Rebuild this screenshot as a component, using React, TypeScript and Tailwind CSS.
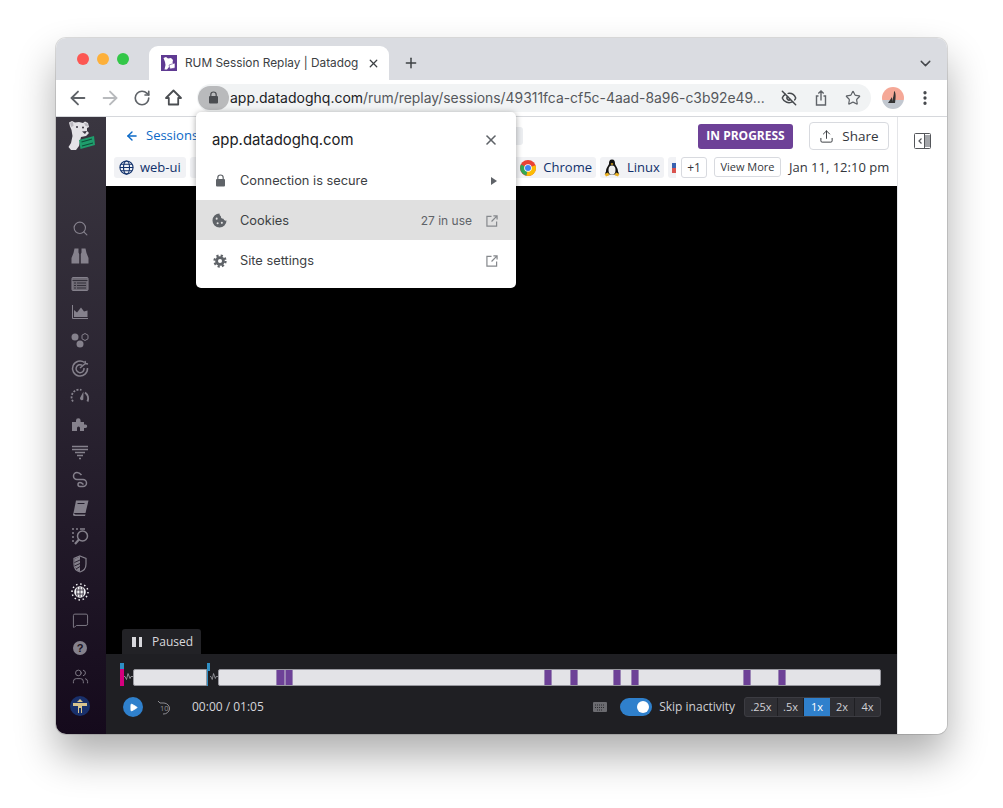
import React from "react";
import { ArrowLeft, ArrowRight, RotateCw, EyeOff, Star, X, Plus, ChevronDown, EllipsisVertical, Upload, Search, MessageSquare, Users, Play } from "lucide-react";

const Ic = ({ children, w = 20, h = 20 }: { children: React.ReactNode; w?: number; h?: number }) => (
  <svg width={w} height={h} viewBox="0 0 20 20" fill="none" className="shrink-0">{children}</svg>
);
const G = "#85818c";

const Dog = () => (
  <svg width="28" height="32" viewBox="0 0 28 32" className="shrink-0">
    <path d="M2 3.500 L5 2 L8 3.500 L12 3 L16 4 L18 2.500 L21 4 L22 8 L20 9 L20 12 L22 14 L19 17 L14 18 L13 22 L12 27 L9 31 L4 31 L1.500 28 L4 24 L5.500 17 L4.500 11 L3 7.500 Z" fill="#e4e2e6" />
    <path d="M3 3.500 L6 3 L6.500 7 L4 8 Z" fill="#b9b6bd" />
    <path d="M17 4 L20.500 4.500 L21 7.500 L18.500 7 Z" fill="#b9b6bd" />
    <circle cx="10" cy="8" r="1" fill="#3a3540" />
    <circle cx="16" cy="8.500" r="1" fill="#3a3540" />
    <path d="M15 12.500 L20 12 L18 15 Z" fill="#3a3540" />
    <path d="M12 21 L27 17 L28 26 L13.500 30 Z" fill="#1f9d6c" />
    <path d="M14.500 23 L25 20 M15 27 L26 24" stroke="#0e4f3a" strokeWidth="1.200" />
  </svg>
);

const Cog = ({ c = "#5f6368", hole = "#fff" }: { c?: string; hole?: string }) => (
  <svg width="14" height="14" viewBox="0 0 16 16" className="shrink-0 mx-[0.5px]">
    <circle cx="8" cy="8" r="5.500" fill={c} />
    <circle cx="8" cy="8" r="6.300" fill="none" stroke={c} strokeWidth="2.600" strokeDasharray="2.500 2.450" />
    <circle cx="8" cy="8" r="2.300" fill={hole} />
  </svg>
);
const CookieIc = () => (
  <svg width="15" height="15" viewBox="0 0 16 16" className="shrink-0">
    <path d="M8 .5a7.500 7.500 0 1 0 7.500 7.500c-1.500.5-3-.3-3.200-1.800C10.500 6.500 9 5 9.500 3.200 8.300 3 8 1.700 8 .5z" fill="#5f6368" />
    <circle cx="5" cy="6" r="1.100" fill="#e0e0e0" />
    <circle cx="6" cy="11" r="1.100" fill="#e0e0e0" />
    <circle cx="10.500" cy="10.500" r="1.100" fill="#e0e0e0" />
  </svg>
);
const Ext = () => (
  <svg width="12" height="12" viewBox="0 0 13 13" fill="none" stroke="#85888c" strokeWidth="1.300" className="shrink-0">
    <path d="M6 1.500H1v10.500h10.500V7" />
    <path d="M12 1 6 7M8 1h4v4" />
  </svg>
);
const LockIc = ({ c }: { c: string }) => (
  <svg width="11" height="13" viewBox="0 0 11 13" className="shrink-0">
    <path d="M2.800 5.500V3.700a2.700 2.700 0 0 1 5.400 0v1.800" fill="none" stroke={c} strokeWidth="1.200" />
    <rect x="1" y="5" width="9" height="7.500" rx="1" fill={c} />
  </svg>
);

const icons: React.ReactNode[] = [
  <Search key="a" size={17} color={G} strokeWidth={1.6} />,
  <Ic key="b"><path d="M4.500 2.500h4v4l.7 1.500v9.500H1.500V12l2-5zM11.500 2.500h4l1 4.500 2 5v5.500h-7.700V8l.7-1.500z" fill={G} /></Ic>,
  <Ic key="c"><rect x="2" y="3.500" width="16" height="13" rx="1" fill="#6d6973" stroke={G} /><path d="M2.500 6.500h15" stroke="#33303a" /><path d="M4 9h2M4 11.500h2M4 14h2M7 9h9M7 11.500h9M7 14h9" stroke="#33303a" strokeWidth="1" /></Ic>,
  <Ic key="d"><path d="M2.500 3v13.500h15.500" stroke={G} /><path d="M4 15V8l3 2.500 4-5 3 4 3.500-1V15z" fill={G} /></Ic>,
  <Ic key="e"><circle cx="5" cy="7" r="3.500" fill={G} /><circle cx="10" cy="14" r="3.500" fill={G} /><path d="M15 3.500l3 1.700v3.600L15 10.500l-3-1.700V5.200z" stroke={G} /></Ic>,
  <Ic key="f"><path d="M14.500 4.500A7.500 7.500 0 1 0 17.500 10" stroke={G} strokeWidth="1.500" /><path d="M12.500 7.500A4 4 0 1 0 14 10" stroke={G} strokeWidth="1.500" /><path d="M10 10l6-5M15 3l.5 2.500 2.500.5" stroke={G} strokeWidth="1.500" /></Ic>,
  <Ic key="g"><path d="M3 15.500A7.500 7.500 0 0 1 11.500 4" stroke={G} strokeWidth="1.800" strokeDasharray="2 1.400" /><path d="M13.500 5.500l-3.500 6.500a1.900 1.900 0 0 0 3.300 1.500z" fill={G} /><path d="M15 6.500A7.500 7.500 0 0 1 17.500 15.500" stroke={G} strokeWidth="2" /></Ic>,
  <Ic key="h"><path d="M2 8h4V6.500a2.300 2.300 0 0 1 4.600 0V8H14v2.500h1.500a1.700 1.700 0 0 1 0 3.400H14V17h-4v-3a1.500 1.500 0 0 0-3 0v3H2z" fill={G} /></Ic>,
  <Ic key="i"><path d="M2 4.500h16M2 7.500h16M5 10.500h10M7 13.500h6M9 16.500h2" stroke={G} strokeWidth="1.400" /></Ic>,
  <Ic key="j"><path d="M7 2.500a3.500 3.500 0 0 0 0 7h6a3.500 3.500 0 0 1 0 7h-3a2 2 0 0 1 0-4c1.500 0 2.500 1 3.500 2M7 2.500c2 0 3 .8 4.500 2.500" stroke={G} strokeWidth="1.500" /></Ic>,
  <Ic key="k"><path d="M6 2.500h12.500l-3 12.500H3.500z" fill={G} /><path d="M3.500 15c-1 1.500-.5 3 1 3h10.500l.5-1.500H5.500" fill={G} /><path d="M7.500 5.500h7" stroke="#231d2c" /></Ic>,
  <Ic key="l"><path d="M2 3h2M6 3h2M10 3h5M2 7h2M2 11h2M2 15h2" stroke={G} strokeWidth="1.500" /><circle cx="12.500" cy="10" r="5" stroke={G} strokeWidth="1.500" /><path d="M9 13.500l-4 4.500" stroke={G} strokeWidth="2.200" /></Ic>,
  <Ic key="m"><path d="M10 2l6 2.500V10c0 4-2.500 7-6 8-3.500-1-6-4-6-8V4.500z" stroke={G} strokeWidth="1.200" /><path d="M10 2.500v15C6.500 16.500 4.500 13.500 4.500 10V5z" fill={G} /><path d="M4.500 8.500L10 6M4.500 12L10 9.500M6 15l4-2.500" stroke="#1f1726" strokeWidth=".9" /></Ic>,
  <Ic key="n"><circle cx="10" cy="10" r="5.800" fill="#f3f2f4" /><path d="M6 8h8M6 12h8M10 5v10M7.500 5.500c-1 3-1 6 0 9M12.500 5.500c1 3 1 6 0 9" stroke="#231d2c" strokeWidth=".8" /><circle cx="10" cy="10" r="8" stroke="#f3f2f4" strokeWidth="1.500" strokeDasharray="1.500 2.680" /></Ic>,
  <MessageSquare key="o" size={17} color={G} strokeWidth={1.3} />,
  <Ic key="p"><circle cx="10" cy="10" r="7" fill={G} /><text x="10" y="14" textAnchor="middle" fontSize="11" fontWeight="700" fontFamily="Liberation Sans, sans-serif" fill="#1b1322">?</text></Ic>,
  <Users key="q" size={17} color={G} strokeWidth={1.3} />,
];

const Chrome = () => (
  <svg width="16" height="16" viewBox="0 0 16 16" className="shrink-0">
    <circle cx="8" cy="8" r="8" fill="#ea4335" />
    <path d="M8 8L1 4.500A8 8 0 0 0 6.500 15.800z" fill="#34a853" />
    <path d="M8 8l7.500-2.700A8 8 0 0 1 6.500 15.800z" fill="#fbbc04" />
    <circle cx="8" cy="8" r="3.800" fill="#fff" />
    <circle cx="8" cy="8" r="3" fill="#4285f4" />
  </svg>
);
const Tux = () => (
  <svg width="18" height="18" viewBox="0 0 18 18" className="shrink-0">
    <path d="M9 .5c2.500 0 3 2 3 4 0 2 3 4 3 8l1 2-3 2-1-1H6l-1 1-3-2 1-2c0-4 3-6 3-8s.5-4 3-4z" fill="#111" />
    <ellipse cx="9" cy="11" rx="3.500" ry="4.500" fill="#eee" />
    <path d="M7.500 5l1.500-1 1.500 1-1.500 1z" fill="#e9b020" />
    <path d="M1.500 15l3.500-1.500 1.500 2.500-3.500 1.500zM16.500 15L13 13.500 11.500 16l3.500 1.500z" fill="#e9b020" />
  </svg>
);

const marks = [[276, 9], [285, 8], [544, 8], [570, 8], [613, 8], [631, 8], [743, 8], [778, 8]];
const Squiggle = ({ w }: { w: number }) => (
  <svg width={w} height="17" viewBox="0 0 9 17" preserveAspectRatio="none" className="shrink-0">
    <path d="M0 7.500h1l1.500 3 1.500-6 2 5 1-2h2" stroke="#a8a8ae" fill="none" strokeWidth=".8" />
  </svg>
);

export default function App() {
  return (
    <div className="w-[1003px] h-[808px] bg-white pl-[56px] pt-[38px] overflow-hidden" style={{ fontFamily: '"Open Sans", sans-serif' }}>
      <div className="relative w-[891px] h-[696px] rounded-[10px] overflow-hidden flex flex-col bg-white shadow-[0_0_0_1px_rgba(0,0,0,0.12),0_22px_40px_rgba(0,0,0,0.32)]">
        {/* tab strip */}
        <div className="h-[42px] shrink-0 bg-[#dadce1] flex items-end pl-[93px] pr-[13px]" style={{ fontFamily: "Inter, sans-serif" }}>
          <div className="w-[240px] h-[34px] bg-white rounded-t-[9px] flex items-center pl-[12px] pr-[9px] text-[#3c4043]">
            <div className="w-[16px] h-[16px] bg-[#5f3a92] flex items-center justify-center shrink-0">
              <svg width="14" height="14" viewBox="0 0 14 14"><path d="M1.500 2L4 1l2 1.500L9 2l2 2-.5 2.500L12 9 9 11.500l-2-.5-2 2.500H2.500L3.500 9 3 6z" fill="#fff" /><path d="M7 9l6-2v5l-5 1z" fill="#fff" stroke="#5f3a92" strokeWidth=".6" /></svg>
            </div>
            <span className="ml-[8px] mt-px text-[11.850px] leading-none whitespace-nowrap">RUM Session Replay | Datadog</span>
            <X size={13} strokeWidth={2.4} className="ml-auto" />
          </div>
          <div className="h-[34px] flex items-center ml-[14px]">
            <Plus size={16} strokeWidth={2.2} color="#3c4043" />
          </div>
          <div className="h-[34px] flex items-center ml-auto">
            <ChevronDown size={17} strokeWidth={2} color="#45484c" />
          </div>
        </div>
        {/* toolbar */}
        <div className="h-[37px] shrink-0 bg-white border-b border-[#d6d8dc] flex items-center pb-px" style={{ fontFamily: "Inter, sans-serif" }}>
          <div className="w-[141px] flex items-center pl-[11px] gap-[10px] shrink-0">
            <ArrowLeft size={22} color="#5f6368" strokeWidth={2} />
            <ArrowRight size={22} color="#b8babd" strokeWidth={2} />
            <RotateCw size={18} color="#5f6368" strokeWidth={2.2} className="ml-[2px]" />
            <svg width="19" height="19" viewBox="0 0 19 19" fill="none" stroke="#4b4e52" strokeWidth="1.800" className="ml-[3px] shrink-0"><path d="M9.500 2.500L2 10h2.800v6.500h9.400V10H17z" strokeLinejoin="round" /></svg>
          </div>
          <div className="w-[674px] h-[28px] bg-[#f1f3f4] rounded-full flex items-center shrink-0">
            <div className="w-[31px] h-[24px] ml-px bg-[#b9babc] rounded-full flex items-center justify-center">
              <LockIc c="#4a4c50" />
            </div>
            <span className="ml-[1px] text-[13.900px] whitespace-nowrap text-[#55585c]"><span className="text-[14px] text-[#202124]">app.datadoghq.com</span>/rum/replay/sessions/49311fca-cf5c-4aad-8a96-c3b92e49...</span>
            <div className="ml-auto flex items-center gap-[16px] pr-[10px]">
              <EyeOff size={16} color="#45484c" strokeWidth={2.2} />
              <svg width="16" height="16" viewBox="0 0 16 16" fill="none" stroke="#5f6368" strokeWidth="1.400" className="shrink-0"><path d="M5.500 6H3.500v9h9V6h-2M8 10.500V1M5.300 3.500L8 1l2.700 2.500" /></svg>
              <Star size={16} color="#5f6368" strokeWidth={1.8} />
            </div>
          </div>
          <div className="w-[22px] h-[22px] rounded-full ml-[11px] shrink-0 overflow-hidden bg-[linear-gradient(180deg,#f5a897_0%,#f5a897_60%,#c2c8d0_60%)] flex items-center justify-center">
            <svg width="12" height="16" viewBox="0 0 12 16"><path d="M7 1c2 1 2 6 1 12H5c0-4 2-6 2-12zM1 13l4-6v6z" fill="#333" /></svg>
          </div>
          <EllipsisVertical size={18} color="#45484c" strokeWidth={2.4} className="ml-[12px]" />
        </div>
        {/* body */}
        <div className="flex-1 flex min-h-0">
          {/* sidebar */}
          <div className="w-[50px] shrink-0 bg-[linear-gradient(180deg,#3a3640_0%,#2a2431_45%,#150a1c_100%)] flex flex-col items-center pr-[2px]">
            <div className="mt-[2px] ml-[2px] h-[32px]"><Dog /></div>
            <div className="mt-[67px] flex flex-col items-center gap-[8px]">
              {icons.map((ic, i) => (
                <div key={i} className="h-[20px] w-[20px] flex items-center justify-center">{ic}</div>
              ))}
            </div>
            <div className="mt-[10px] w-[20px] h-[20px] rounded-full bg-[#19306b] overflow-hidden flex items-center justify-center">
              <svg width="16" height="14" viewBox="0 0 16 14"><path d="M8 0l3 3H5zM1 4h14v3h-5v7H9V9H7v5H6V7H1z" fill="#d9c48e" /></svg>
            </div>
          </div>
          {/* main */}
          <div className="w-[791px] shrink-0 flex flex-col">
            <div className="h-[69px] shrink-0 bg-white pl-[8px] pr-[8px]">
              <div className="h-[38px] flex items-center">
                <div className="flex items-center pl-[11px] text-[#0b69c7] text-[13px] w-[409px]">
                  <ArrowLeft size={14} strokeWidth={2.4} />
                  <span className="ml-[7px]">Sessions</span>
                  <div className="ml-auto w-[20px] h-[18px] bg-[#eceef1] rounded-[3px]"></div>
                </div>
                <div className="ml-auto h-[25px] w-[95px] bg-[#6d4197] rounded-[3px] text-white text-[12px] font-bold flex items-center justify-center whitespace-nowrap">IN PROGRESS</div>
                <div className="ml-[16px] h-[28px] w-[80px] border border-[#d8dadf] rounded-[4px] flex items-center justify-center gap-[8px] text-[13.500px] text-[#33363b]">
                  <Upload size={15} strokeWidth={1.5} />
                  <span>Share</span>
                </div>
              </div>
              <div className="h-[31px] flex items-start pt-[2px] text-[13px]">
                <div className="h-[21px] w-[72px] bg-[#f1f2f5] rounded-[3px] flex items-center pl-[5px] gap-[6px] text-[#10306b] shrink-0">
                  <svg width="15" height="15" viewBox="0 0 16 16" fill="none" stroke="#10306b" strokeWidth="1.200"><circle cx="8" cy="8" r="7" /><ellipse cx="8" cy="8" rx="3.200" ry="7" /><path d="M1 8h14M2 4.500h12M2 11.500h12" /></svg>
                  <span>web-ui</span>
                </div>
                <div className="w-[318px] h-[21px] ml-[4px] bg-[#f1f2f5] rounded-[3px] shrink-0"></div>
                <div className="h-[21px] w-[84px] ml-[4px] bg-[#f1f2f5] rounded-[3px] flex items-center justify-end pr-[4px] gap-[7px] text-[#10306b] shrink-0">
                  <Chrome />
                  <span>Chrome</span>
                </div>
                <div className="h-[21px] w-[64px] ml-[4px] bg-[#f1f2f5] rounded-[3px] flex items-center pl-[3px] gap-[6px] text-[#10306b] shrink-0">
                  <Tux />
                  <span>Linux</span>
                </div>
                <div className="h-[21px] w-[8px] ml-[4px] bg-[#f1f2f5] rounded-l-[3px] flex items-center shrink-0 pl-[4px]">
                  <div className="w-[4px] h-[10px] bg-[linear-gradient(180deg,#3a62b0_50%,#d9534f_50%)]"></div>
                </div>
                <div className="h-[21px] w-[26px] ml-[5px] border border-[#d8dadf] rounded-[3px] flex items-center justify-center text-[12px] text-[#33363b] shrink-0">+1</div>
                <div className="h-[20px] w-[67px] ml-[7px] border border-[#d8dadf] rounded-[3px] flex items-center justify-center text-[11px] text-[#33363b] whitespace-nowrap shrink-0">View More</div>
                <span className="ml-[8px] text-[13px] text-[#33363b] whitespace-nowrap leading-[21px]">Jan 11, 12:10 pm</span>
              </div>
            </div>
            <div className="flex-1 bg-black flex flex-col justify-end pl-[16px]">
              <div className="w-[79px] h-[25px] bg-[#222226] rounded-t-[3px] flex items-center pl-[10px] gap-[10px] text-[12px] text-[#d8d8dc]">
                <div className="flex gap-[3px]">
                  <div className="w-[3.500px] h-[10px] bg-[#d8d8dc]"></div>
                  <div className="w-[3.500px] h-[10px] bg-[#d8d8dc]"></div>
                </div>
                <span>Paused</span>
              </div>
            </div>
            <div className="h-[80px] shrink-0 bg-[#1f1f23] pl-[15px]">
              <div className="h-[9px]"></div>
              <div className="h-[23px] flex items-end -ml-px">
                <div className="w-[4px] h-[23px] flex flex-col shrink-0">
                  <div className="h-[6px] bg-[#2f8fc4]"></div>
                  <div className="flex-1 bg-[#d6007e]"></div>
                </div>
                <Squiggle w={9} />
                <div className="w-[74px] h-[17px] bg-[#e3e3e7] border border-[#97979e] rounded-l-[2px] shrink-0"></div>
                <div className="w-[3px] h-[23px] flex flex-col shrink-0">
                  <div className="h-[8px] bg-[#2f8fc4]"></div>
                  <div className="flex-1 w-[1px] bg-[#2f8fc4]"></div>
                </div>
                <Squiggle w={8} />
                <div className="w-[663px] h-[17px] bg-[#e3e3e7] border border-[#97979e] rounded-[2px] shrink-0 relative">
                  {marks.map(([x, w]) => (
                    <div key={x} className="absolute top-[0px] bottom-[0px] bg-[#6d4197] border-x border-[#9b85b5]" style={{ left: x - 219, width: w }} />
                  ))}
                </div>
              </div>
              <div className="h-[42px] flex items-center pr-[16px]">
                <div className="ml-[2px] w-[20px] h-[20px] rounded-full bg-[#2f80cc] flex items-center justify-center shrink-0">
                  <Play size={9} fill="#fff" color="#fff" className="ml-px" />
                </div>
                <div className="ml-[14px] w-[16px] h-[16px] shrink-0">
                  <svg width="16" height="16" viewBox="0 0 16 16" fill="none" stroke="#8e8e94" strokeWidth="1"><path d="M1 2l2 2h4a6 5.500 0 1 1 -1 11" /><text x="3" y="12" fontSize="7.500" stroke="none" fill="#8e8e94" fontFamily="Open Sans, sans-serif">10</text></svg>
                </div>
                <span className="ml-[19px] text-[12px] text-[#d6d6da] whitespace-nowrap">00:00 / 01:05</span>
                <div className="ml-auto flex items-center">
                  <svg width="14" height="10" viewBox="0 0 14 10" className="shrink-0"><rect width="14" height="10" rx="1" fill="#6b6b70" /><path d="M2 3h10M2 5.500h10M4 8h6" stroke="#2a2a2e" strokeDasharray="1 1" /></svg>
                  <div className="ml-[13px] w-[32px] h-[18px] rounded-full bg-[#2f80cc] flex items-center justify-end pr-[3px] shrink-0">
                    <div className="w-[12px] h-[12px] rounded-full bg-white"></div>
                  </div>
                  <span className="ml-[7px] text-[12px] text-[#d0d0d4] whitespace-nowrap">Skip inactivity</span>
                  <div className="ml-[9px] h-[20px] flex border border-[#3c3c42] rounded-[3px] overflow-hidden text-[11px] text-[#d0d0d4] bg-[#2f2f34]">
                    <div className="w-[33px] flex items-center justify-center border-r border-[#1f1f23]">.25x</div>
                    <div className="w-[26px] flex items-center justify-center border-r border-[#1f1f23]">.5x</div>
                    <div className="w-[26px] flex items-center justify-center bg-[#2f80cc] text-white">1x</div>
                    <div className="w-[25px] flex items-center justify-center border-r border-[#1f1f23]">2x</div>
                    <div className="w-[25px] flex items-center justify-center">4x</div>
                  </div>
                </div>
              </div>
            </div>
          </div>
          {/* right panel */}
          <div className="flex-1 border-l border-[#e4e5e8] bg-white flex justify-center pt-[16px]">
            <svg width="17" height="16" viewBox="0 0 17 16" fill="none" stroke="#54565a" strokeWidth="1">
              <rect x=".5" y=".5" width="16" height="15" rx="1" />
              <path d="M11 2h5v12h-5z" fill="#a4a6aa" stroke="none" />
              <path d="M10.500 .5v15" />
              <path d="M7.500 5.500L5 8l2.500 2.500" strokeWidth="1.200" />
            </svg>
          </div>
        </div>
        {/* site info popup */}
        <div className="absolute left-[140px] top-[74px] w-[320px] h-[176px] bg-white rounded-[5px] shadow-[0_1px_6px_rgba(0,0,0,0.35)] text-[12.800px] text-[#3c4043] pt-[8px]" style={{ fontFamily: "Inter, sans-serif" }}>
          <div className="h-[40px] flex items-center pl-[16px] pr-[17px]">
            <span className="text-[14.900px] text-[#202124]">app.datadoghq.com</span>
            <X size={16} strokeWidth={2.4} color="#5f6368" className="ml-auto" />
          </div>
          <div className="h-[40px] flex items-center pl-[16px] pr-[19px] pt-px">
            <div className="w-[16px] flex justify-center">
              <LockIc c="#5f6368" />
            </div>
            <span className="ml-[12px]">Connection is secure</span>
            <svg width="6" height="8" viewBox="0 0 6 8" className="ml-auto"><path d="M0 0l6 4-6 4z" fill="#5f6368" /></svg>
          </div>
          <div className="h-[40px] flex items-center pl-[16px] pr-[18px] bg-[#e0e0e0] pt-px">
            <CookieIc />
            <span className="ml-[13px]">Cookies</span>
            <span className="ml-auto text-[12px] text-[#5f6368]">27 in use</span>
            <div className="ml-[14px]"><Ext /></div>
          </div>
          <div className="h-[40px] flex items-center pl-[16px] pr-[18px] pt-px">
            <Cog />
            <span className="ml-[13px]">Site settings</span>
            <div className="ml-auto"><Ext /></div>
          </div>
        </div>
        {/* traffic lights */}
        <div className="absolute left-[21px] top-[15px] flex gap-[8px]">
          <div className="w-[12px] h-[12px] rounded-full bg-[#fc5753]"></div>
          <div className="w-[12px] h-[12px] rounded-full bg-[#fdb03a]"></div>
          <div className="w-[12px] h-[12px] rounded-full bg-[#33c748]"></div>
        </div>
      </div>
    </div>
  );
}
